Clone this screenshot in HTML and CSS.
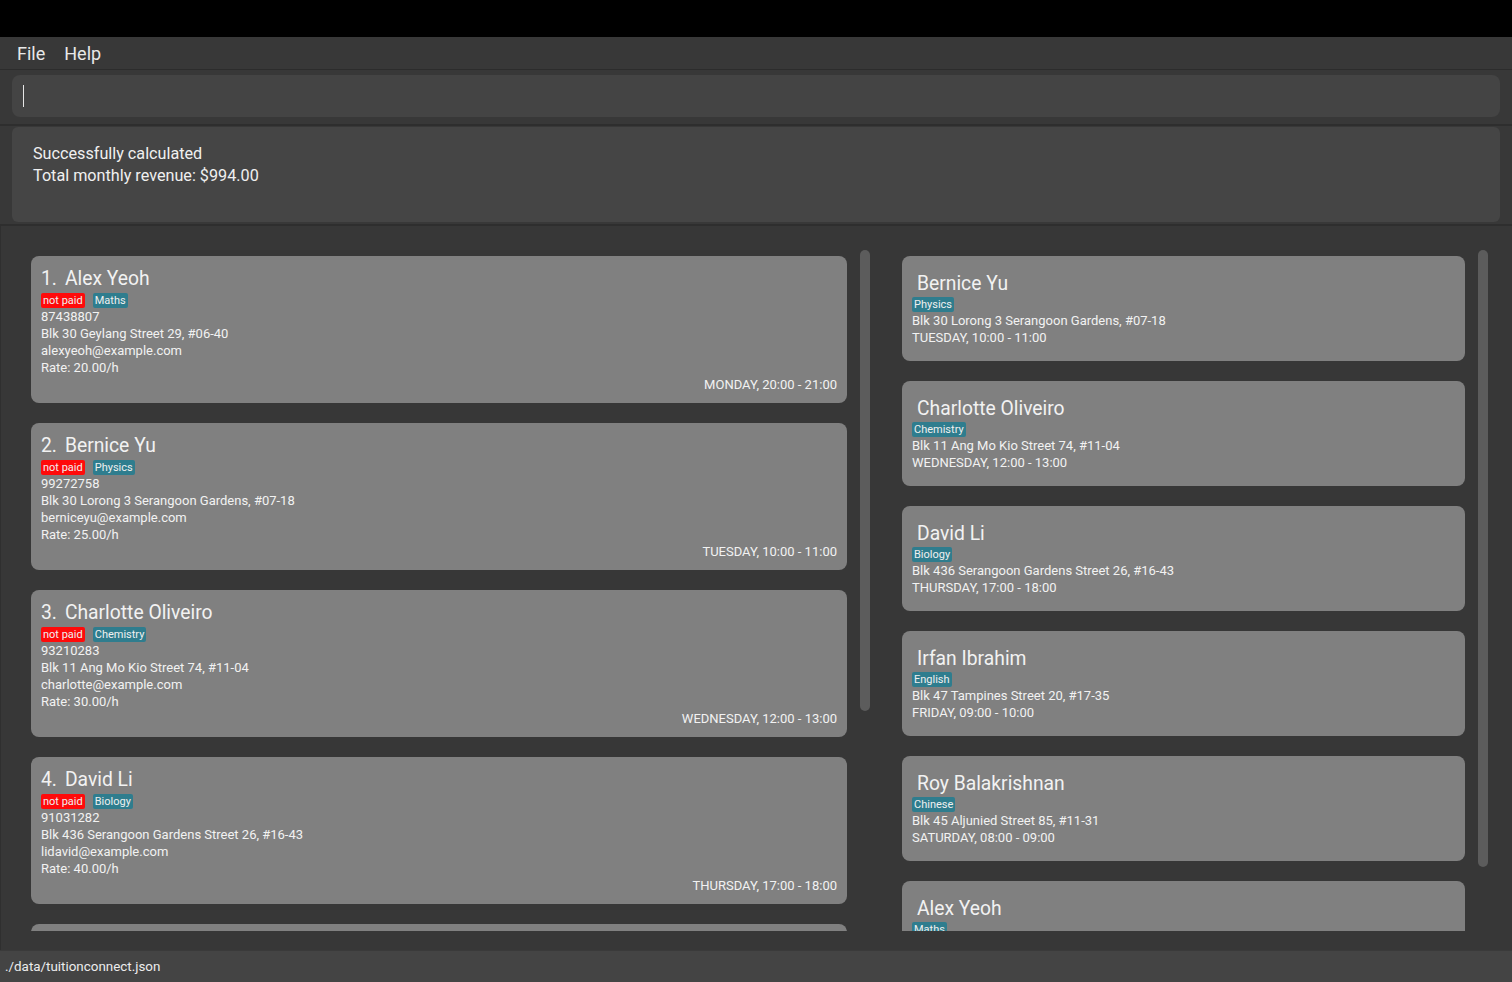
FILE: index.html
```html
<!DOCTYPE html>
<html lang="en">
<head>
<meta charset="utf-8">
<title>TuitionConnect</title>
<link rel="stylesheet" href="styles.css">
</head>
<body>
<div class="app">
  <div class="titlebar"></div>
  <div class="menubar">
    <span class="menu-item">File</span>
    <span class="menu-item">Help</span>
  </div>
  <div class="command-area">
    <div class="command-box"><span class="caret"></span></div>
  </div>
  <div class="result-area">
    <div class="result-box">
      <div>Successfully calculated</div>
      <div>Total monthly revenue: $994.00</div>
    </div>
  </div>
  <div class="list-area">
    <div class="panel panel-left">
      <div class="viewport">
        <div class="card">
          <div class="name"><span class="idx">1.</span>Alex Yeoh</div>
          <div class="tags"><span class="tag tag-red">not paid</span><span class="tag">Maths</span></div>
          <div class="line">87438807</div>
          <div class="line">Blk 30 Geylang Street 29, #06-40</div>
          <div class="line">alexyeoh@example.com</div>
          <div class="line">Rate: 20.00/h</div>
          <div class="line sched">MONDAY, 20:00 - 21:00</div>
        </div>
        <div class="card">
          <div class="name"><span class="idx">2.</span>Bernice Yu</div>
          <div class="tags"><span class="tag tag-red">not paid</span><span class="tag">Physics</span></div>
          <div class="line">99272758</div>
          <div class="line">Blk 30 Lorong 3 Serangoon Gardens, #07-18</div>
          <div class="line">berniceyu@example.com</div>
          <div class="line">Rate: 25.00/h</div>
          <div class="line sched">TUESDAY, 10:00 - 11:00</div>
        </div>
        <div class="card">
          <div class="name"><span class="idx">3.</span>Charlotte Oliveiro</div>
          <div class="tags"><span class="tag tag-red">not paid</span><span class="tag">Chemistry</span></div>
          <div class="line">93210283</div>
          <div class="line">Blk 11 Ang Mo Kio Street 74, #11-04</div>
          <div class="line">charlotte@example.com</div>
          <div class="line">Rate: 30.00/h</div>
          <div class="line sched">WEDNESDAY, 12:00 - 13:00</div>
        </div>
        <div class="card">
          <div class="name"><span class="idx">4.</span>David Li</div>
          <div class="tags"><span class="tag tag-red">not paid</span><span class="tag">Biology</span></div>
          <div class="line">91031282</div>
          <div class="line">Blk 436 Serangoon Gardens Street 26, #16-43</div>
          <div class="line">lidavid@example.com</div>
          <div class="line">Rate: 40.00/h</div>
          <div class="line sched">THURSDAY, 17:00 - 18:00</div>
        </div>
        <div class="card card-empty"></div>
      </div>
      <div class="thumb thumb-left"></div>
    </div>
    <div class="panel panel-right">
      <div class="viewport">
        <div class="card card-s">
          <div class="name">Bernice Yu</div>
          <div class="tags"><span class="tag">Physics</span></div>
          <div class="line">Blk 30 Lorong 3 Serangoon Gardens, #07-18</div>
          <div class="line">TUESDAY, 10:00 - 11:00</div>
        </div>
        <div class="card card-s">
          <div class="name">Charlotte Oliveiro</div>
          <div class="tags"><span class="tag">Chemistry</span></div>
          <div class="line">Blk 11 Ang Mo Kio Street 74, #11-04</div>
          <div class="line">WEDNESDAY, 12:00 - 13:00</div>
        </div>
        <div class="card card-s">
          <div class="name">David Li</div>
          <div class="tags"><span class="tag">Biology</span></div>
          <div class="line">Blk 436 Serangoon Gardens Street 26, #16-43</div>
          <div class="line">THURSDAY, 17:00 - 18:00</div>
        </div>
        <div class="card card-s">
          <div class="name">Irfan Ibrahim</div>
          <div class="tags"><span class="tag">English</span></div>
          <div class="line">Blk 47 Tampines Street 20, #17-35</div>
          <div class="line">FRIDAY, 09:00 - 10:00</div>
        </div>
        <div class="card card-s">
          <div class="name">Roy Balakrishnan</div>
          <div class="tags"><span class="tag">Chinese</span></div>
          <div class="line">Blk 45 Aljunied Street 85, #11-31</div>
          <div class="line">SATURDAY, 08:00 - 09:00</div>
        </div>
        <div class="card card-s card-cut">
          <div class="name">Alex Yeoh</div>
          <div class="tags"><span class="tag">Maths</span></div>
        </div>
      </div>
      <div class="thumb thumb-right"></div>
    </div>
  </div>
  <div class="statusbar">./data/tuitionconnect.json</div>
</div>
</body>
</html>
```
FILE: styles.css
```css
* { box-sizing: border-box; }
html, body { margin: 0; padding: 0; }
body {
  width: 1512px;
  height: 982px;
  overflow: hidden;
  background: #383838;
  font-family: Roboto, "Liberation Sans", sans-serif;
  color: #ededed;
}
.app { display: flex; flex-direction: column; height: 982px; }
.titlebar { height: 37px; background: #000; flex: none; }
.menubar {
  height: 33px; flex: none;
  background: #383838;
  border-bottom: 1px solid #2c2c2c;
  display: flex; align-items: center;
  padding-left: 17px; gap: 19px;
  font-size: 18px; color: #e8e8e8;
}
.command-area {
  height: 56px; flex: none;
  padding: 5px 12px 0 12px;
  background: #383838;
  border-bottom: 2px solid #2e2e2e;
}
.command-box {
  height: 42px; background: #444444; border-radius: 8px;
  display: flex; align-items: center; padding-left: 11px;
}
.caret { width: 1px; height: 22px; background: #e6e6e6; }
.result-area {
  height: 100px; flex: none;
  padding: 1px 12px 0 12px;
  background: #383838;
  border-bottom: 2px solid #2e2e2e;
}
.result-box {
  height: 95px; background: #454545; border-radius: 6px;
  padding: 16px 21px; font-size: 16.2px; line-height: 22px; color: #f0f0f0;
}
.list-area {
  flex: 1; min-height: 0;
  display: flex; align-items: flex-start;
  padding: 24px 0 0 20px;
  background: #373737;
  border-left: 1px solid #2f2f2f;
}
.panel { display: flex; height: 681px; }
.panel-left { width: 849px; }
.panel-right { width: 596px; margin-left: 22px; }
.viewport {
  height: 681px; overflow: hidden;
  padding: 6px 10px 0 10px;
  display: flex; flex-direction: column; gap: 20px;
}
.panel-left .viewport { flex: none; width: 836px; }
.panel-right .viewport { flex: none; width: 583px; }
.thumb { width: 10px; margin-left: 3px; background: #5c5c5c; border-radius: 5px; flex: none; }
.thumb-left { height: 461px; }
.thumb-right { height: 617px; }
.card {
  flex: none;
  background: #808080; border-radius: 8px;
  padding: 10px;
  color: #f2f2f2;
}
.card-empty { height: 147px; }
.name { font-size: 19.3px; line-height: 26px; }
.idx { display: inline-block; margin-right: 8px; }
.tags { display: flex; gap: 8px; margin-top: 1px; height: 15px; }
.tag {
  font-size: 11px; line-height: 15px; height: 15px;
  padding: 0 2px; border-radius: 2px;
  background: #2f7d8e; color: #f0f0f0;
}
.tag-red { background: #ff0a0a; }
.line { font-size: 13px; line-height: 17px; }
.sched { text-align: right; }
.card-s { padding: 15px 10px 15px 10px; }
.card-s .name { padding-left: 5px; line-height: 25px; }
.card-cut { height: 105px; }
.statusbar {
  height: 32px; flex: none;
  background: #444444;
  border-top: 1px solid #3a3a3a;
  padding-left: 5px;
  display: flex; align-items: center;
  font-size: 13.4px; color: #ececec;
}
```
